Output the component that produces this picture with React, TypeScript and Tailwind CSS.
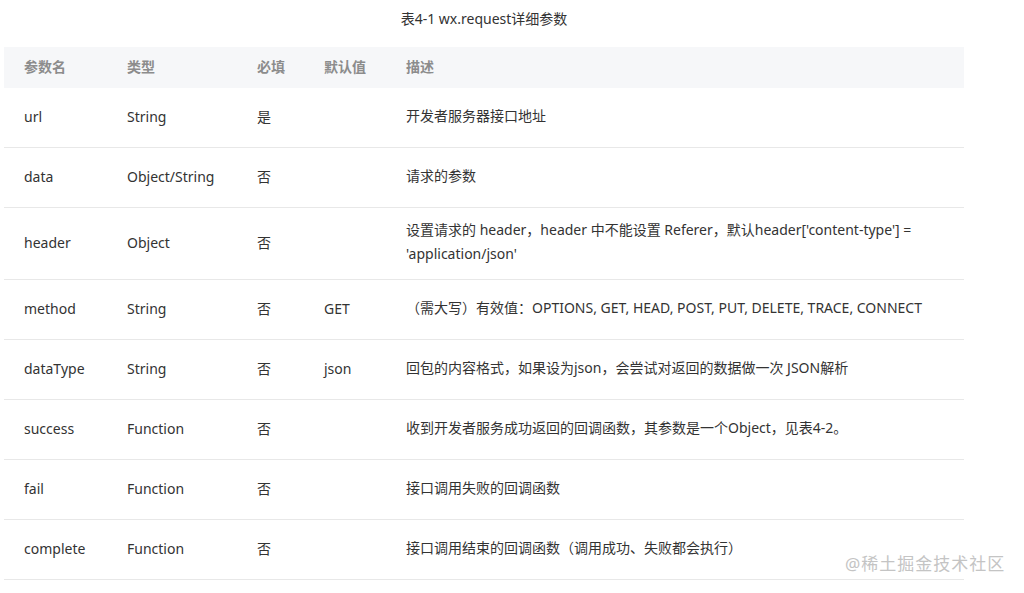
import React from "react";

const rows: { name: string; type: string; req: string; def: string; desc: React.ReactNode; tall?: boolean }[] = [
  { name: "url", type: "String", req: "是", def: "", desc: "开发者服务器接口地址" },
  { name: "data", type: "Object/String", req: "否", def: "", desc: "请求的参数" },
  {
    name: "header",
    type: "Object",
    req: "否",
    def: "",
    tall: true,
    desc: (
      <>
        设置请求的 header，header 中不能设置 Referer，默认header['content-type'] =
        <br />
        'application/json'
      </>
    ),
  },
  {
    name: "method",
    type: "String",
    req: "否",
    def: "GET",
    desc: "（需大写）有效值：OPTIONS, GET, HEAD, POST, PUT, DELETE, TRACE, CONNECT",
  },
  {
    name: "dataType",
    type: "String",
    req: "否",
    def: "json",
    desc: "回包的内容格式，如果设为json，会尝试对返回的数据做一次 JSON解析",
  },
  {
    name: "success",
    type: "Function",
    req: "否",
    def: "",
    desc: "收到开发者服务成功返回的回调函数，其参数是一个Object，见表4-2。",
  },
  { name: "fail", type: "Function", req: "否", def: "", desc: "接口调用失败的回调函数" },
  {
    name: "complete",
    type: "Function",
    req: "否",
    def: "",
    desc: "接口调用结束的回调函数（调用成功、失败都会执行）",
  },
];

const App = () => {
  return (
    <div
      className="relative w-[1024px] h-[593px] bg-white overflow-hidden text-[#333] text-[14px]"
      style={{ fontFamily: '"Noto Sans", "Noto Sans CJK SC", sans-serif' }}
    >
      {/* Caption */}
      <div className="w-[968px] h-[36px] flex items-center justify-center text-[14px] text-[#333]">
        表4-1 wx.request详细参数
      </div>

      {/* Table */}
      <div className="ml-[4px] mt-[11px] w-[960px]">
        <div className="grid grid-cols-[103px_130px_67px_82px_1fr] h-[41px] pb-[3px] items-center bg-[#f6f7f9] font-bold text-[#8c8c8c]">
          <div className="pl-[20px]">参数名</div>
          <div className="pl-[20px]">类型</div>
          <div className="pl-[20px]">必填</div>
          <div className="pl-[20px]">默认值</div>
          <div className="pl-[20px]">描述</div>
        </div>
        {rows.map((r) => (
          <div
            key={r.name}
            className={`grid grid-cols-[103px_130px_67px_82px_1fr] items-center pb-[3px] border-b border-[#e8e8e8] ${
              r.tall ? "h-[72px]" : "h-[60px]"
            }`}
          >
            <div className="pl-[20px]">{r.name}</div>
            <div className="pl-[20px]">{r.type}</div>
            <div className="pl-[20px]">{r.req}</div>
            <div className="pl-[20px]">{r.def}</div>
            <div className="pl-[20px] leading-[24px] whitespace-nowrap">{r.desc}</div>
          </div>
        ))}
      </div>

      {/* Watermark */}
      <div className="absolute left-[845px] top-[551px] text-[17px] text-[#c4c4c4] tracking-[1px]">
        @稀土掘金技术社区
      </div>
    </div>
  );
};

export default App;
